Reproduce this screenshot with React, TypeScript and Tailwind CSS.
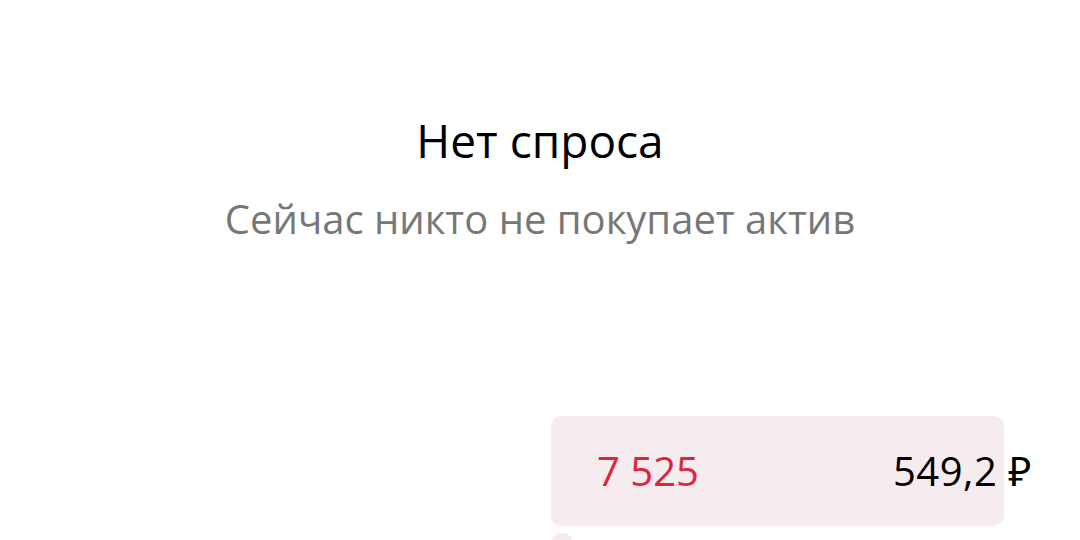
import React from "react";

export default function App() {
  return (
    <div
      className="w-[1080px] h-[540px] overflow-hidden bg-white flex flex-col"
      style={{ fontFamily: '"Open Sans", "Noto Sans", sans-serif' }}
    >
      <div className="flex flex-col items-center pt-[112px]">
        <div className="text-[46px] leading-[56px] text-[#000]">Нет спроса</div>
        <div className="mt-[27px] text-[40px] leading-[48px] text-[#777777]">
          Сейчас никто не покупает актив
        </div>
      </div>
      <div className="mt-[173px] flex flex-col gap-[7px] pl-[551px]">
        <div className="relative h-[110px] flex items-center justify-between pl-[46px] pr-[48px]">
          <div
            className="absolute left-0 top-0 bottom-0 rounded-[10px] bg-[#f6ecef]"
            style={{ width: 453 }}
          />
          <span className="relative text-[40px] text-[#dd2438]">7 525</span>
          <span className="relative text-[40px] tracking-[0.5px] text-[#000]">549,2 ₽</span>
        </div>
        <div className="h-[110px] w-[22px] rounded-[10px] bg-[#f6ecef]" />
      </div>
    </div>
  );
}
